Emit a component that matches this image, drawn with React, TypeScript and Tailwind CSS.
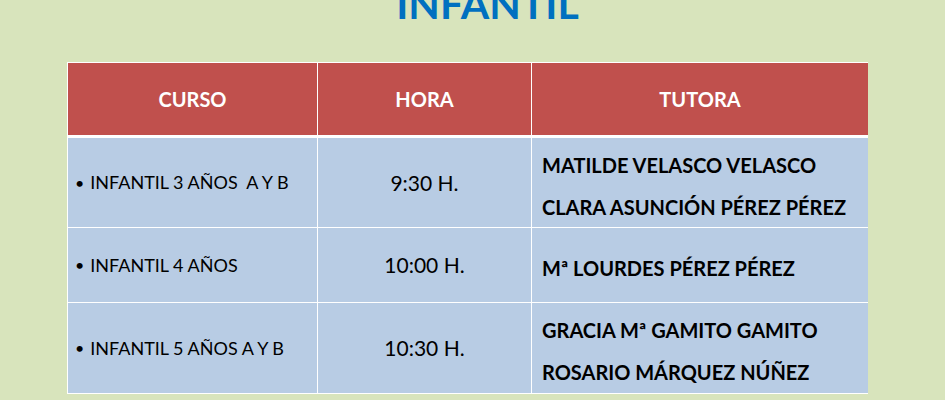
const rows = [
  { curso: "INFANTIL 3 AÑOS  A Y B", hora: "9:30 H.", tutoras: ["MATILDE VELASCO VELASCO", "CLARA ASUNCIÓN PÉREZ PÉREZ"], h: "h-[89px]" },
  { curso: "INFANTIL 4 AÑOS", hora: "10:00 H.", tutoras: ["Mª LOURDES PÉREZ PÉREZ"], h: "h-[74px]" },
  { curso: "INFANTIL 5 AÑOS A Y B", hora: "10:30 H.", tutoras: ["GRACIA Mª GAMITO GAMITO", "ROSARIO MÁRQUEZ NÚÑEZ"], h: "h-[90px]" },
];

export default function App() {
  return (
    <div className="w-[945px] h-[400px] overflow-hidden bg-[#d8e4bc] font-['Lato','Open_Sans',sans-serif]">
      {/* Title, cut at the top like the slide */}
      <h1 className="-mt-[28px] h-[90px] text-center text-[41px] font-bold leading-[64px] text-[#0070c0] pl-[30px]">
        INFANTIL
      </h1>

      <div className="ml-[67px] w-[801px] bg-white p-px grid grid-cols-[249px_213px_336px] gap-x-px">
        {["CURSO", "HORA", "TUTORA"].map((t) => (
          <div key={t} className="h-[72px] mb-[3px] bg-[#c0504d] flex items-center justify-center text-white font-bold text-[20px]">
            {t}
          </div>
        ))}

        {rows.map((r, i) => (
          <div key={r.curso} className="contents">
            <div className={`${r.h} ${i > 0 ? "mt-px" : ""} bg-[#b8cce4] flex items-center pl-[7px] text-[18px] text-black`}>
              <span className="mr-[6px] text-[16px]">•</span>
              <span className="whitespace-pre">{r.curso}</span>
            </div>
            <div className={`${r.h} ${i > 0 ? "mt-px" : ""} bg-[#b8cce4] flex items-center justify-center text-[21px] text-black`}>
              {r.hora}
            </div>
            <div className={`${r.h} ${i > 0 ? "mt-px" : ""} bg-[#b8cce4] flex flex-col justify-center pl-[10px] text-[20px] font-bold text-black leading-[42px] pt-[6px]`}>
              {r.tutoras.map((n) => (
                <div key={n}>{n}</div>
              ))}
            </div>
          </div>
        ))}
      </div>
    </div>
  );
}
